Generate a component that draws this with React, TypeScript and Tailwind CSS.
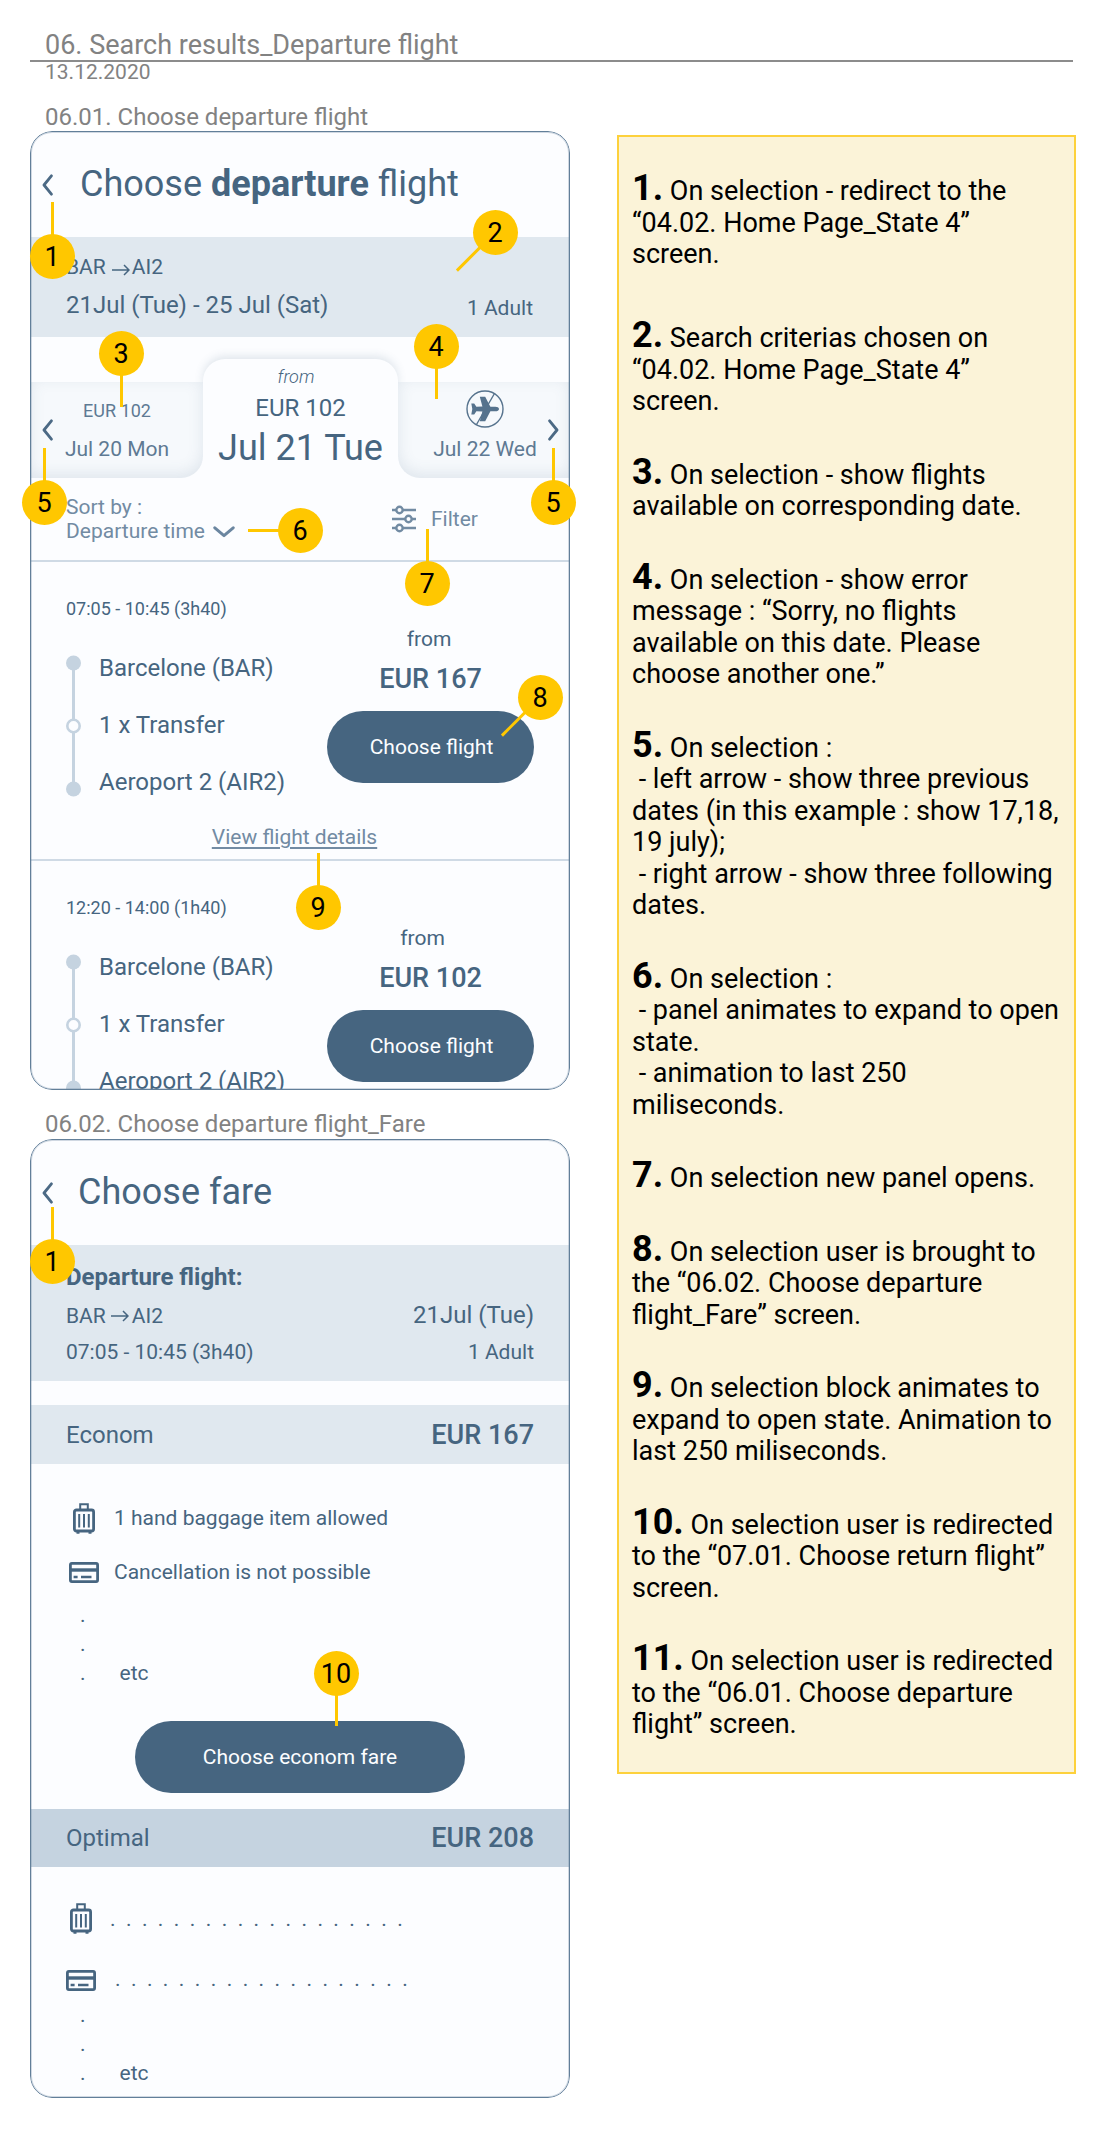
import React from "react";

const screenTitle = "text-[36px] leading-[42px]";
const body24 = "text-2xl leading-[28px]";
const body21 = "text-[21px] leading-[24px]";
const body18 = "text-lg leading-[20px]";
const price = "text-[27px] leading-[32px] font-medium";

function Chevron({ className = "", flip = false }: { className?: string; flip?: boolean }) {
  return (
    <svg viewBox="0 0 11 22" className={`h-[22px] w-[11px] shrink-0 ${className}`} fill="none" stroke="#4c6a85" strokeWidth="2.8" strokeLinecap="round" strokeLinejoin="round">
      <path d={flip ? "M1.6 1.8 9 11 1.6 20.2" : "M9.4 1.8 2 11l7.4 9.2"} />
    </svg>
  );
}

function Arrow({ className = "" }: { className?: string }) {
  return (
    <svg viewBox="0 0 18 12" className={`h-3 w-[18px] ${className}`} fill="none" stroke="#466580" strokeWidth="1.5">
      <path d="M0 6h17M12 1l5 5-5 5" />
    </svg>
  );
}

function Luggage() {
  return (
    <svg viewBox="0 0 22 31" className="h-[31px] w-[22px]" fill="none" stroke="#466580">
      <path d="M7.2 6.5V1.2h7.6v5.3" strokeWidth="2" />
      <rect x="1.4" y="7" width="19.2" height="21" rx="2" strokeWidth="2.8" />
      <path d="M6.2 11v13.5M11 11v13.5M15.8 11v13.5" strokeWidth="2" />
      <path d="M3.5 29.6h3M15.5 29.6h3" strokeWidth="2.2" />
    </svg>
  );
}

function PaymentCard() {
  return (
    <svg viewBox="0 0 30 21" className="h-[21px] w-[30px]" fill="none" stroke="#466580">
      <rect x="1.4" y="1.4" width="27.2" height="18.2" rx="1.5" strokeWidth="2.8" />
      <path d="M1 8h28" strokeWidth="3.4" />
      <path d="M4.6 15h4M12 15h10.5" strokeWidth="2.6" />
    </svg>
  );
}

function NoPlane() {
  return (
    <svg viewBox="0 0 38 38" className="h-[38px] w-[38px]">
      <circle cx="19" cy="19" r="18" fill="none" stroke="#56738d" strokeWidth="1.4" />
      <path d="M28.5 3.5 10.5 34.5" stroke="#56738d" strokeWidth="1.4" />
      <path
        d="M33 19c0-1.4-1.8-2.3-3.6-2.3h-5L19.2 6.8h-5.4l2.6 9.8-6 .1-2.2-3.3H5.3L6.3 19l-1 5.6h2.9l2.2-3.3 6 .1-2.6 9.8h5.4l5.2-9.9h5c1.8 0 3.6-.9 3.6-2.3z"
        fill="#56738d"
      />
    </svg>
  );
}

function FilterIcon() {
  return (
    <svg viewBox="0 0 24 28" className="h-7 w-6" fill="none" stroke="#728ba3" strokeWidth="2.4">
      <path d="M0 5h4.3M10.7 5H24M0 14h13.3M19.7 14H24M0 23h4.3M10.7 23H24" />
      <circle cx="7.5" cy="5" r="3.2" />
      <circle cx="16.5" cy="14" r="3.2" />
      <circle cx="7.5" cy="23" r="3.2" />
    </svg>
  );
}

function Screen({ children, className = "" }: { children: React.ReactNode; className?: string }) {
  return (
    <section className={`relative ml-[30px] h-[959px] w-[540px] overflow-hidden rounded-[22px] bg-[#fcfdff] text-[#466580] ${className}`}>
      {children}
      <div className="pointer-events-none absolute inset-0 rounded-[22px] border border-[#627f99] shadow-[inset_0_0_0_1px_rgba(107,134,160,0.3)]" />
    </section>
  );
}

const legs = ["Barcelone (BAR)", "1 x Transfer", "Aeroport 2 (AIR2)"];

function FlightCard({ time, fare, nudge, details = false }: { time: string; fare: string; nudge: string; details?: boolean }) {
  return (
    <article className="h-[299px] border-b-2 border-[#cfdae5]">
      <div className="flex h-[263px] justify-between px-9">
        <div className="pt-[37px]">
          <p className={body18}>{time}</p>
          <div className="mt-[35px] flex">
            <svg viewBox="0 0 15 142" className="mt-[1px] h-[142px] w-[15px]">
              <path d="M7.5 8v126" stroke="#c5d3e0" strokeWidth="3" />
              <circle cx="7.5" cy="8" r="7.5" fill="#c5d3e0" />
              <circle cx="7.5" cy="71" r="6.2" fill="#fcfdff" stroke="#c5d3e0" strokeWidth="2.6" />
              <circle cx="7.5" cy="134" r="7.5" fill="#c5d3e0" />
            </svg>
            <ul className={`ml-[18px] flex flex-col gap-[29px] ${body24}`}>
              {legs.map((leg) => (
                <li key={leg}>{leg}</li>
              ))}
            </ul>
          </div>
        </div>
        <div className="flex w-[207px] flex-col items-center pt-[65px]">
          <p className={`${body21} ${nudge}`}>from</p>
          <p className={`mt-[12px] ${price}`}>{fare}</p>
          <button className={`mt-[16px] h-[72px] w-[207px] shrink-0 rounded-full bg-[#466580] pl-[2px] text-[#fcfdff] ${body21}`}>Choose flight</button>
        </div>
      </div>
      {details && (
        <p className={`mr-[11px] text-center text-[#728ba3] ${body21}`}>
          <a className="underline decoration-[1.5px] underline-offset-[3px]">View flight details</a>
        </p>
      )}
    </article>
  );
}

function Ellipsis() {
  return (
    <div className="flex pl-[50px] text-[21px] leading-[29px]">
      <div className="w-[39.5px]">
        <p>.</p>
        <p>.</p>
        <p>.</p>
      </div>
      <p className="self-end">etc</p>
    </div>
  );
}

const dotted = Array(19).fill(".").join("  ");

const notes: { n: string; lines: string[]; gap: string }[] = [
  { n: "1.", lines: ["On selection - redirect to the", "“04.02. Home Page_State 4”", "screen."], gap: "" },
  { n: "2.", lines: ["Search criterias chosen on", "“04.02. Home Page_State 4”", "screen."], gap: "mt-[52.5px]" },
  { n: "3.", lines: ["On selection - show flights", "available on corresponding date."], gap: "mt-[42px]" },
  { n: "4.", lines: ["On selection - show error", "message : “Sorry, no flights", "available on this date. Please", "choose another one.”"], gap: "mt-[42px]" },
  { n: "5.", lines: ["On selection :", " - left arrow - show three previous", "dates (in this example : show 17,18,", "19 july);", " - right arrow - show three following", "dates."], gap: "mt-[42px]" },
  { n: "6.", lines: ["On selection :", " - panel animates to expand to open", "state.", " - animation to last 250", "miliseconds."], gap: "mt-[42px]" },
  { n: "7.", lines: ["On selection new panel opens."], gap: "mt-[42px]" },
  { n: "8.", lines: ["On selection user is brought to", "the “06.02. Choose departure", "flight_Fare” screen."], gap: "mt-[42px]" },
  { n: "9.", lines: ["On selection block animates to", "expand to open state. Animation to", "last 250 miliseconds."], gap: "mt-[42px]" },
  { n: "10.", lines: ["On selection user is redirected", "to the “07.01. Choose return flight”", "screen."], gap: "mt-[42px]" },
  { n: "11.", lines: ["On selection user is redirected", "to the “06.01. Choose departure", "flight” screen."], gap: "mt-[42px]" },
];

const up = "left-[21px] bottom-[44px] w-[3px]";
const diagonal = "left-[-24px] top-[40px] h-[3px] w-[54px] rotate-[-45deg]";
const markers: { n: string; at: string; leader: string }[] = [
  { n: "1", at: "left-[30px] top-[234px]", leader: `${up} h-[33px]` },
  { n: "2", at: "left-[473px] top-[210px]", leader: diagonal },
  { n: "3", at: "left-[99px] top-[331px]", leader: "left-[21px] top-[44px] w-[3px] h-[32px]" },
  { n: "4", at: "left-[414px] top-[324px]", leader: "left-[21px] top-[44px] w-[3px] h-[31px]" },
  { n: "5", at: "left-[22px] top-[480px]", leader: `${up} h-[33px]` },
  { n: "5", at: "left-[531px] top-[480px]", leader: `${up} h-[33px]` },
  { n: "6", at: "left-[278px] top-[508px]", leader: "left-[-30px] top-[21px] h-[3px] w-[32px]" },
  { n: "7", at: "left-[405px] top-[561px]", leader: `${up} h-[33px]` },
  { n: "8", at: "left-[518px] top-[675px]", leader: diagonal },
  { n: "9", at: "left-[296px] top-[885px]", leader: `${up} h-[33px]` },
  { n: "1", at: "left-[30px] top-[1239px]", leader: `${up} h-[33px]` },
  { n: "10", at: "left-[314px] top-[1651px]", leader: "left-[21px] top-[44px] w-[3px] h-[31px]" },
];

export default function App() {
  return (
    <main className="relative flex h-[2131px] w-[1106px] flex-col overflow-hidden bg-white font-['Roboto',sans-serif]">
      <header className="ml-[30px] w-[1043px] text-[#828282]">
        <h1 className="mt-[29px] h-[31px] pl-[15px] text-[27px] leading-[32px]">06. Search results_Departure flight</h1>
        <div className="h-[2px] bg-[#8c8c8c]" />
        <p className="pl-[15px] text-[21px] leading-[21px]">13.12.2020</p>
      </header>

      <div className="flex items-start">
        <div className="w-[617px]">
          <h2 className={`mt-[20px] pl-[45px] text-[#828282] ${body24}`}>06.01. Choose departure flight</h2>
          <Screen>
            <div className="flex h-[106px]">
              <Chevron className="ml-3 mt-[42.5px]" />
              <h3 className={`ml-[27px] mt-8 ${screenTitle}`}>
                Choose <b className="font-bold">departure</b> flight
              </h3>
            </div>
            <div className="h-[100px] bg-[#e0e8ef] pl-9 pr-[37px] pt-[18px]">
              <p className={`flex ${body21}`}>
                BAR
                <Arrow className="ml-[6px] mt-[9px]" />
                <span className="ml-[2px]">AI2</span>
              </p>
              <div className="mt-3 flex justify-between">
                <p className={body24}>21Jul (Tue) - 25 Jul (Sat)</p>
                <p className={`mt-[5px] ${body21}`}>1 Adult</p>
              </div>
            </div>

            <div className="mt-[22px] flex h-[119px] items-end">
              <div className="flex h-[96px] w-[173px] rounded-br-[22px] bg-[#f6f9fc] text-[#5e7a93] shadow-[inset_0_-4px_15px_rgba(70,101,128,0.13)]">
                <Chevron className="ml-3 mt-[37px]" />
                <div className="flex-1 pr-[22px] pt-[19px] text-center">
                  <p className={body18}>EUR 102</p>
                  <p className={`mt-4 ${body21}`}>Jul 20 Mon</p>
                </div>
              </div>
              <div className="h-[119px] w-[195px] rounded-t-[22px] bg-[#fcfdff] pt-2 text-center shadow-[0_-3px_8px_rgba(70,101,128,0.15)] [clip-path:polygon(-16px_-16px,211px_-16px,211px_23px,195px_23px,195px_119px,0px_119px,0px_23px,-16px_23px)]">
                <p className={`mr-[9px] font-light italic ${body18}`}>from</p>
                <p className={`mt-[7px] ${body24}`}>EUR 102</p>
                <p className={`mt-[5px] ${screenTitle}`}>Jul 21 Tue</p>
              </div>
              <div className="flex h-[96px] flex-1 rounded-bl-[22px] bg-[#f6f9fc] text-[#5e7a93] shadow-[inset_0_-4px_15px_rgba(70,101,128,0.13)]">
                <div className="flex flex-1 flex-col items-center pl-[24px] pt-2">
                  <NoPlane />
                  <p className={`mt-[9px] whitespace-nowrap ${body21}`}>Jul 22 Wed</p>
                </div>
                <Chevron flip className="mr-[11px] mt-[37px]" />
              </div>
            </div>

            <div className="flex h-[84px] border-b-2 border-[#cfdae5] pl-9 pt-[17px] text-[#728ba3]">
              <div className={`w-[147px] whitespace-nowrap ${body21}`}>
                <p>Sort by :</p>
                <p>Departure time</p>
              </div>
              <svg viewBox="0 0 22 12" className="mt-[31px] h-3 w-[22px]" fill="none" stroke="#6b86a0" strokeWidth="3" strokeLinecap="round" strokeLinejoin="round">
                <path d="M1.8 1.8 11 9.6l9.2-7.8" />
              </svg>
              <div className="ml-[157px] mt-[10px] flex">
                <FilterIcon />
                <p className={`ml-[15px] mt-[2px] ${body21}`}>Filter</p>
              </div>
            </div>

            <FlightCard time="07:05 - 10:45 (3h40)" fare="EUR 167" nudge="mr-[3px]" details />
            <FlightCard time="12:20 - 14:00 (1h40)" fare="EUR 102" nudge="mr-[16px]" />
          </Screen>

          <h2 className={`mt-[20px] pl-[45px] text-[#828282] ${body24}`}>06.02. Choose departure flight_Fare</h2>
          <Screen className="mt-[1px]">
            <div className="flex h-[106px]">
              <Chevron className="ml-3 mt-[42.5px]" />
              <h3 className={`ml-[25px] mt-8 ${screenTitle}`}>Choose fare</h3>
            </div>
            <div className="h-[136px] bg-[#e0e8ef] pl-9 pr-[36px] pt-[18px]">
              <p className={`font-bold ${body24}`}>Departure flight:</p>
              <div className="mt-[10px] flex items-baseline justify-between">
                <p className={`flex ${body21}`}>
                  BAR
                  <Arrow className="ml-[5px] mt-[6px]" />
                  <span className="ml-[3px]">AI2</span>
                </p>
                <p className={body24}>21Jul (Tue)</p>
              </div>
              <div className={`mt-[11px] flex justify-between ${body21}`}>
                <p>07:05 - 10:45 (3h40)</p>
                <p>1 Adult</p>
              </div>
            </div>
            <div className="mt-6 flex h-[59px] justify-between bg-[#e0e8ef] pl-9 pr-9">
              <p className={`mt-4 ${body24}`}>Econom</p>
              <p className={`mt-[14px] ${price}`}>EUR 167</p>
            </div>
            <div className={`flex flex-col gap-[30px] pl-[39px] pt-[42px] ${body21}`}>
              <div className="flex h-6 items-center">
                <div className="flex w-[30px] justify-center"><Luggage /></div>
                <p className="ml-[15px]">1 hand baggage item allowed</p>
              </div>
              <div className="flex h-6 items-center">
                <PaymentCard />
                <p className="ml-[15px]">Cancellation is not possible</p>
              </div>
            </div>
            <div className="pt-[17px]">
              <Ellipsis />
            </div>
            <button className={`ml-[105px] mt-[33px] block h-[72px] w-[330px] rounded-full bg-[#466580] text-[#fcfdff] ${body21}`}>Choose econom fare</button>
            <div className="mt-4 flex h-[58px] justify-between bg-[#c5d3e0] pl-9 pr-9">
              <p className={`mt-[15px] ${body24}`}>Optimal</p>
              <p className={`mt-[13px] ${price}`}>EUR 208</p>
            </div>
            <div className={`flex flex-col gap-9 whitespace-pre pl-9 pt-10 ${body21}`}>
              <div className="flex h-6">
                <div className="-mt-1 flex w-[30px] justify-center"><Luggage /></div>
                <p className="ml-[14px]">{dotted}</p>
              </div>
              <div className="flex h-6">
                <div className="mt-[3px]"><PaymentCard /></div>
                <p className="ml-[19px]">{dotted}</p>
              </div>
            </div>
            <div className="pt-[10px]">
              <Ellipsis />
            </div>
          </Screen>
        </div>

        <aside className="mt-[52px] h-[1639px] w-[459px] border-2 border-[#fdd13c] bg-[#fbf3d8] pl-[13px] pt-[39px] text-[27px] leading-[31.5px] text-black">
          {notes.map((note) => (
            <div key={note.n} className={`whitespace-pre ${note.gap}`}>
              {note.lines.map((line, i) => (
                <p key={line} className="h-[31.5px]">
                  {i === 0 && <b className="text-[36px] leading-[0] font-bold">{note.n}</b>}
                  {i === 0 ? ` ${line}` : line}
                </p>
              ))}
            </div>
          ))}
        </aside>
      </div>

      {markers.map((m) => (
        <div key={m.at} className={`absolute flex h-[45px] w-[45px] items-center justify-center rounded-full bg-[#ffc700] text-[27px] leading-[32px] text-black ${m.at}`}>
          <span className={`absolute bg-[#ffc700] ${m.leader}`} />
          <span className="relative pr-px">{m.n}</span>
        </div>
      ))}
    </main>
  );
}
